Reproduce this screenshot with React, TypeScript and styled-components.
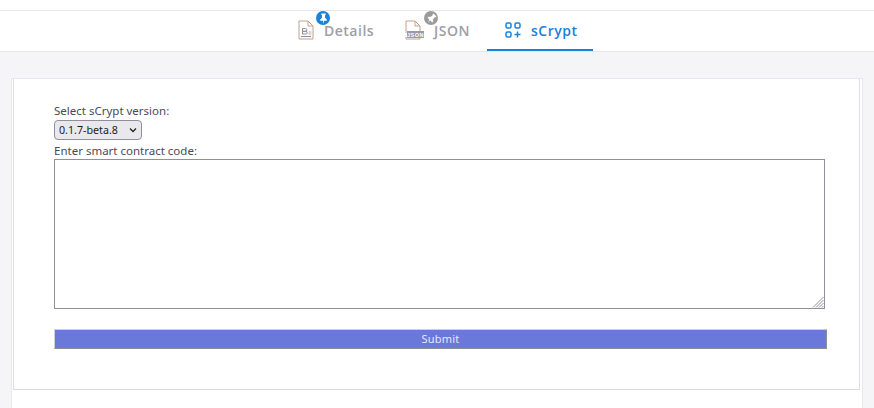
import React from 'react';
import styled, { createGlobalStyle } from 'styled-components';

const GlobalStyle = createGlobalStyle`
  html, body {
    margin: 0;
    padding: 0;
    height: 100%;
    background: #f5f5f8;
    overflow: hidden;
  }
  #root {
    height: 100%;
  }
`;

const Page = styled.div`
  display: flex;
  flex-direction: column;
  height: 408px;
  font-family: "Noto Sans", sans-serif;
`;

const TopStrip = styled.div`
  height: 10px;
  background: #fff;
`;

const TabBar = styled.nav`
  display: flex;
  justify-content: center;
  height: 42px;
  box-sizing: border-box;
  background: #fff;
  border-top: 1px solid #e8e8f1;
  border-bottom: 1px solid #e8e8f1;
  padding-right: 6px;
`;

const Tab = styled.div<{ $active?: boolean; $inset: number; $gap: number }>`
  position: relative;
  display: flex;
  align-items: center;
  gap: ${p => p.$gap}px;
  width: 106px;
  height: 40px;
  box-sizing: border-box;
  padding-left: ${p => p.$inset}px;
  color: ${p => (p.$active ? '#1a82d8' : '#9e9ea6')};
  border-bottom: 2px solid ${p => (p.$active ? '#1a82d8' : 'transparent')};
  font-family: "Open Sans", "Noto Sans", sans-serif;
  font-size: 14px;
  font-weight: 600;
  letter-spacing: 0.5px;
`;

const PinBadge = styled.span<{ $color: string; $left: number }>`
  position: absolute;
  top: 0;
  left: ${p => p.$left}px;
  width: 14px;
  height: 14px;
  border-radius: 50%;
  background: ${p => p.$color};
  display: flex;
  align-items: center;
  justify-content: center;
`;

const Content = styled.main`
  flex: 1;
  display: flex;
  padding: 26px 11px 0;
  background: #f5f5f8;
  min-height: 0;
`;

const Panel = styled.div`
  flex: 1;
  background: #fff;
  border: 1px solid #e8e8f1;
  border-bottom: none;
  padding: 0 2px 0 1px;
`;

const Card = styled.form`
  height: 311px;
  box-sizing: border-box;
  border: 1px solid #dedede;
  border-top: none;
  padding: 25px 32px 0 40px;
  display: flex;
  flex-direction: column;
  align-items: flex-start;
`;

const Label = styled.label`
  font-size: 11.5px;
  line-height: 13px;
  margin-bottom: 2px;
  color: #4a4a55;
`;

const VersionSelect = styled.select`
  appearance: none;
  width: 88px;
  height: 20px;
  margin: 1px 0 4px;
  box-sizing: border-box;
  font-family: "Noto Sans", sans-serif;
  font-size: 10.7px;
  color: #1c1c1c;
  background-color: #e9e9ed;
  background-image: url("data:image/svg+xml,%3Csvg xmlns='http://www.w3.org/2000/svg' width='8' height='6'%3E%3Cpath d='M1 1.500l3 3 3-3' fill='none' stroke='%23222' stroke-width='1.300'/%3E%3C/svg%3E");
  background-repeat: no-repeat;
  background-position: right 4px center;
  border: 1px solid #8f8f9d;
  border-radius: 4px;
  padding: 0 0 0 4px;
`;

const CodeWrap = styled.div`
  position: relative;
  width: 771px;
  height: 150px;
`;

const CodeArea = styled.textarea`
  display: block;
  width: 100%;
  height: 100%;
  margin: 0;
  box-sizing: border-box;
  border: 1px solid #8f8f9d;
  border-radius: 0;
  background: #fff;
  padding: 2px;
  resize: none;
`;

const ResizeGrip = styled.svg`
  position: absolute;
  right: 1px;
  bottom: 1px;
  pointer-events: none;
`;

const SubmitButton = styled.button`
  width: 773px;
  height: 20px;
  margin-top: 20px;
  box-sizing: border-box;
  background: #6a78da;
  color: #e8e8f8;
  font-family: "Noto Sans", sans-serif;
  font-size: 11px;
  line-height: 16px;
  letter-spacing: 0.2px;
  padding: 0;
  border: 1px solid;
  border-color: #d0d0d8 #8f8f96 #8f8f96 #d0d0d8;
`;

const Pin = ({ rotate }: { rotate?: number }) => (
  <svg width="11" height="11" viewBox="0 0 10 10" style={{ transform: `rotate(${rotate ?? 0}deg)` }}>
    <path d="M3 0.5h4v1l-0.6 0.5v2.3L8 5.8V7H5.5L5 10 4.5 7H2V5.8l1.6-1.5V2L3 1.5z" fill="#fff" />
  </svg>
);

const DetailsIcon = () => (
  <svg width="16" height="20" viewBox="0 0 16 20" fill="none">
    <path d="M1 1h9l5 5v13H1z" fill="#fff" stroke="#c2a08c" strokeWidth="1" />
    <path d="M10 1v5h5" stroke="#c2a08c" strokeWidth="1" />
    <path d="M3 16.500h10" stroke="#8f8f97" strokeWidth="1" />
    <path d="M4.500 8.500h3a1.300 1.300 0 0 1 0 2.800h-3zM4.500 11.300h3.400a1.300 1.300 0 0 1 0 2.700H4.500z" stroke="#8f8f97" strokeWidth="1" />
    <path d="M10.500 12h3M10.500 14h3" stroke="#a9b4bd" strokeWidth="1" />
  </svg>
);

const JsonIcon = () => (
  <svg width="20" height="20" viewBox="0 0 20 20" fill="none">
    <path d="M1 13V1h9l5 5v5M1 17v2h14v-1" stroke="#c2a08c" strokeWidth="1" />
    <path d="M10 1v5h5" stroke="#c2a08c" strokeWidth="1" />
    <rect x="2" y="11" width="17" height="7" fill="#9b9ba3" />
    <text x="10.500" y="16.800" textAnchor="middle" fontFamily="Liberation Sans, sans-serif" fontSize="5.500" fontWeight="700" fill="#fff">JSON</text>
  </svg>
);

const ScryptIcon = () => (
  <svg width="16" height="16" viewBox="0 0 16 16" fill="none" stroke="#1a82d8" strokeWidth="1.500">
    <rect x="1" y="1" width="5" height="5" rx="1.500" />
    <rect x="10" y="1" width="5" height="5" rx="1.500" />
    <rect x="1" y="10" width="5" height="5" rx="1.500" />
    <path d="M12.500 9.500v6M9.500 12.500h6" />
  </svg>
);

const App: React.FC = () => (
  <Page>
    <GlobalStyle />
    <TopStrip />
    <TabBar>
      <Tab $inset={23} $gap={10}>
        <DetailsIcon />
        <span>Details</span>
        <PinBadge $color="#1a82d8" $left={41}><Pin /></PinBadge>
      </Tab>
      <Tab $inset={24} $gap={9}>
        <JsonIcon />
        <span>JSON</span>
        <PinBadge $color="#9b9b9b" $left={43}><Pin rotate={45} /></PinBadge>
      </Tab>
      <Tab $active $inset={18} $gap={10}>
        <ScryptIcon />
        <span>sCrypt</span>
      </Tab>
    </TabBar>
    <Content>
      <Panel>
        <Card onSubmit={e => e.preventDefault()}>
          <Label>Select sCrypt version:</Label>
          <VersionSelect defaultValue="0.1.7-beta.8">
            <option>0.1.7-beta.8</option>
          </VersionSelect>
          <Label>Enter smart contract code:</Label>
          <CodeWrap>
            <CodeArea />
            <ResizeGrip width="12" height="12" viewBox="0 0 12 12">
              <path d="M11.500 1L1 11.500M11.500 4L4 11.500M11.500 7L7 11.500M11.500 10L10 11.500" stroke="#8f8f9d" strokeWidth="1" fill="none" />
            </ResizeGrip>
          </CodeWrap>
          <SubmitButton type="submit">Submit</SubmitButton>
        </Card>
      </Panel>
    </Content>
  </Page>
);

export default App;
